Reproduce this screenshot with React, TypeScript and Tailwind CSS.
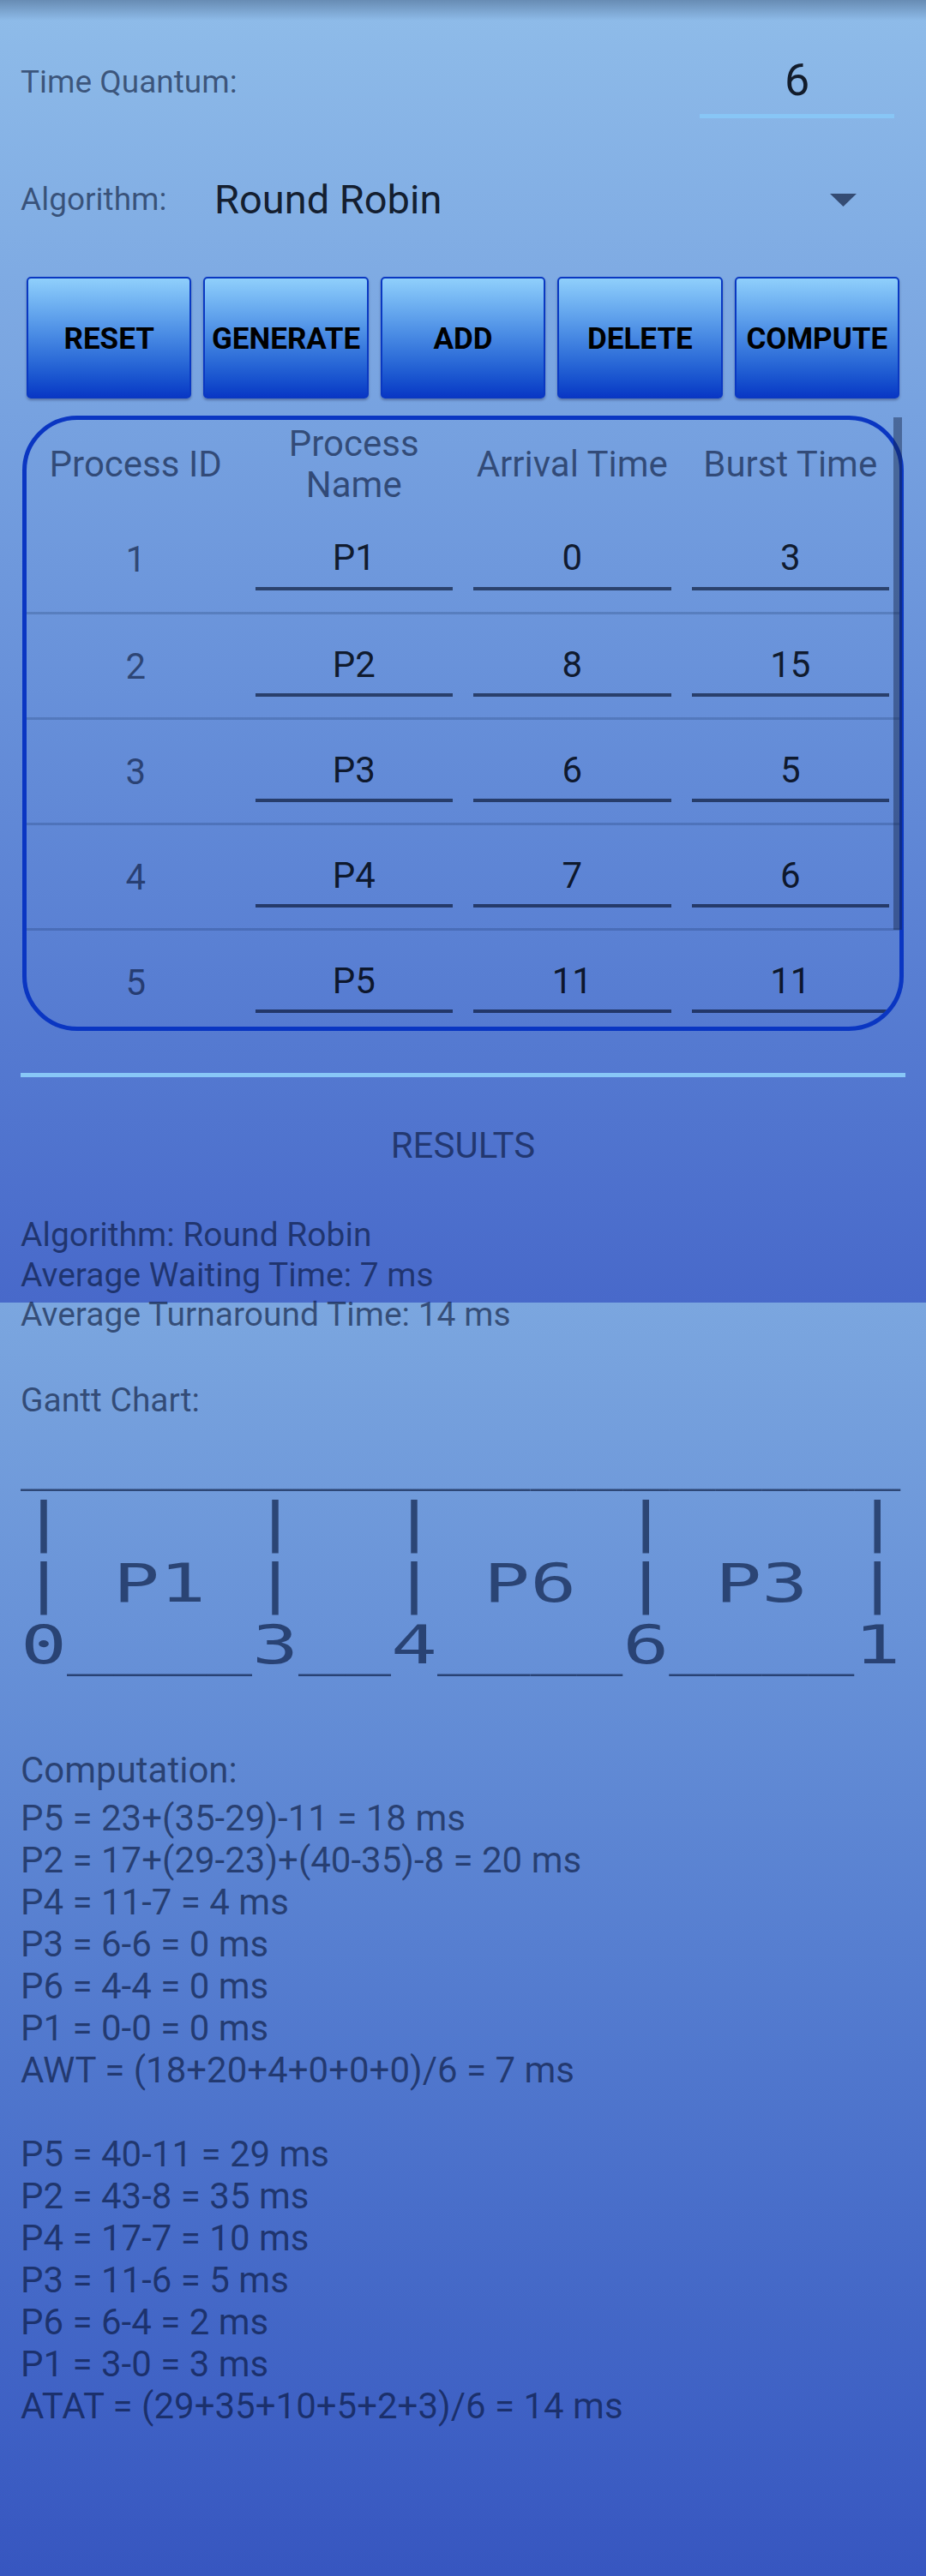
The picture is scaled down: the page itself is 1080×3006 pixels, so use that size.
import React from "react";

const rows = [
  { id: 1, name: "P1", arrival: "0", burst: "3" },
  { id: 2, name: "P2", arrival: "8", burst: "15" },
  { id: 3, name: "P3", arrival: "6", burst: "5" },
  { id: 4, name: "P4", arrival: "7", burst: "6" },
  { id: 5, name: "P5", arrival: "11", burst: "11" },
];

const buttons = ["RESET", "GENERATE", "ADD", "DELETE", "COMPUTE"];

// only the part that fits the screen width is shown
const gantt = [
  "___________________",
  "|    |  |    |    |",
  "| P1 |  | P6 | P3 |",
  "0____3__4____6____1",
];

const computation = [
  "P5 = 23+(35-29)-11 = 18 ms",
  "P2 = 17+(29-23)+(40-35)-8 = 20 ms",
  "P4 = 11-7 = 4 ms",
  "P3 = 6-6 = 0 ms",
  "P6 = 4-4 = 0 ms",
  "P1 = 0-0 = 0 ms",
  "AWT = (18+20+4+0+0+0)/6 = 7 ms",
  "",
  "P5 = 40-11 = 29 ms",
  "P2 = 43-8 = 35 ms",
  "P4 = 17-7 = 10 ms",
  "P3 = 11-6 = 5 ms",
  "P6 = 6-4 = 2 ms",
  "P1 = 3-0 = 3 ms",
  "ATAT = (29+35+10+5+2+3)/6 = 14 ms",
];

// secondary / primary text tints, android style (black at 54% / 87%)
const muted = "text-[rgba(0,10,40,0.56)]";
const ink = "text-[rgba(0,5,15,0.87)]";

function Field({ value }: { value: string }) {
  return (
    <div
      className={`mx-[12px] flex h-[72px] items-center justify-center border-b-4 border-[rgba(0,10,35,0.6)] text-[42px] ${ink}`}
    >
      {value}
    </div>
  );
}

export default function App() {
  return (
    <div className="w-[1080px] font-['Roboto',sans-serif]">
      <section className="h-[1520px] bg-gradient-to-b from-[#8fbce9] to-[#4869ca] px-[24px]">
        {/* app bar shadow */}
        <div className="mx-[-24px] h-[24px] bg-gradient-to-b from-[rgba(30,50,80,0.35)] to-transparent" />

        <div className="flex h-[114px] items-center justify-between pt-[30px]">
          <span className={`text-[37px] ${muted}`}>Time Quantum:</span>
          <div
            className={`mr-[13px] flex h-full w-[227px] items-center justify-center border-b-[5px] border-[#88c6f6] text-[52px] leading-none ${ink}`}
          >
            6
          </div>
        </div>

        <div className="mt-[52px] flex h-[86px] items-center">
          <span className={`w-[226px] text-[37px] ${muted}`}>Algorithm:</span>
          <div className="flex flex-1 items-center justify-between pr-[57px]">
            <span className={`text-[47px] ${ink}`}>Round Robin</span>
            <svg width="31" height="15" viewBox="0 0 31 15">
              <polygon points="0,0 31,0 15.5,15" fill="rgba(0,10,40,0.6)" />
            </svg>
          </div>
        </div>

        <div className="mx-[7px] mt-[47px] grid h-[142px] grid-cols-5 gap-[14px]">
          {buttons.map((b) => (
            <button
              key={b}
              className="rounded-[5px] border-2 border-[#0a38c2] bg-gradient-to-b from-[#8fcffb] to-[#0a37c5] pt-[4px] text-[35px] font-bold text-black shadow-[0_2px_3px_rgba(0,0,40,0.3)]"
            >
              {b}
            </button>
          ))}
        </div>

        <div className="relative mx-[2px] mt-[20px] h-[718px] rounded-[64px] border-[5px] border-[#0a36c2]">
          <div className="h-full overflow-hidden rounded-[59px]">
            <div className={`grid h-[101px] grid-cols-4 items-center pt-[2px] text-center text-[42px] leading-[48px] ${muted}`}>
              <div>Process ID</div>
              <div>
                Process
                <br />
                Name
              </div>
              <div>Arrival Time</div>
              <div>Burst Time</div>
            </div>
            {rows.map((r, i) => (
              <div
                key={r.id}
                className={`grid h-[123px] grid-cols-4 items-center ${
                  i > 0 ? "border-t-[3px] border-[rgba(0,20,60,0.18)]" : ""
                }`}
              >
                <div className={`text-center text-[42px] ${muted}`}>{r.id}</div>
                <Field value={r.name} />
                <Field value={r.arrival} />
                <Field value={r.burst} />
              </div>
            ))}
          </div>
          {/* scroll indicator */}
          <div className="absolute right-[-3px] top-[-3px] h-[598px] w-[10px] bg-[rgba(20,35,70,0.45)]" />
        </div>

        <div className="mt-[49px] h-[5px] bg-[#88c7f7]" />

        <div className={`mt-[56px] text-center text-[42px] leading-[48px] ${muted}`}>RESULTS</div>

        <div className={`mt-[57px] text-[39px] leading-[47px] ${muted}`}>
          <div>Algorithm: Round Robin</div>
          <div>Average Waiting Time: 7 ms</div>
        </div>
      </section>

      <section className="flow-root h-[1486px] bg-gradient-to-b from-[#7ba6df] to-[#3756c0] px-[24px]">
        <div className={`mt-[-9px] text-[39px] leading-[47px] ${muted}`}>Average Turnaround Time: 14 ms</div>

        <div className={`mt-[53px] text-[39px] leading-[47px] ${muted}`}>Gantt Chart:</div>

        <div className="mt-[10px] whitespace-pre font-['DejaVu_Sans_Mono',monospace] text-[62px] leading-[72px] text-[rgba(0,15,50,0.6)]">
          <div className="w-fit origin-left scale-x-[1.447]">
            {gantt.map((l, i) => (
              <div key={i}>{l}</div>
            ))}
          </div>
        </div>

        <div className={`mt-[85px] text-[42px] leading-[49px] ${muted}`}>Computation:</div>

        <div className={`mt-[7px] text-[42px] leading-[49px] ${muted}`}>
          {computation.map((l, i) => (
            <div key={i} className="h-[49px]">
              {l}
            </div>
          ))}
        </div>
      </section>
    </div>
  );
}
